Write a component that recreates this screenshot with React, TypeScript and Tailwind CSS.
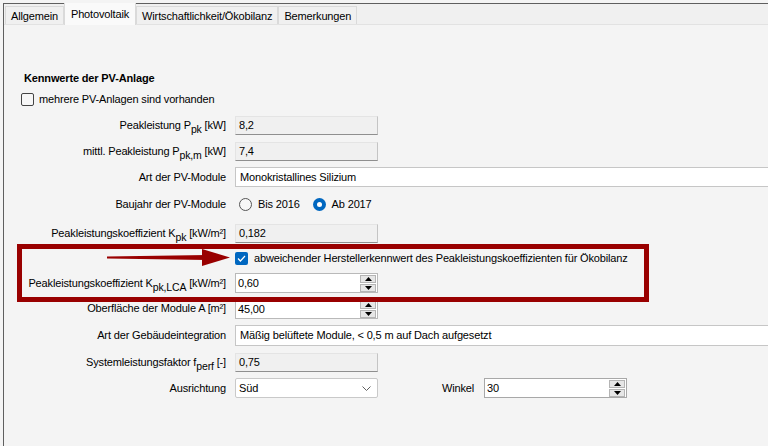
import type { ReactNode } from 'react';

const font = { fontFamily: '"Liberation Sans", Arial, sans-serif' };

function Sub({ children }: { children: ReactNode }) {
  return <span className="relative top-[4px] text-[10.5px] leading-none">{children}</span>;
}

function Row({ label, h, children }: { label?: ReactNode; h: string; children?: ReactNode }) {
  return (
    <div className={`flex items-center ${h}`}>
      <div className="w-[222px] shrink-0 text-right whitespace-nowrap">{label}</div>
      <div className="ml-[9px] flex flex-1 items-center">{children}</div>
    </div>
  );
}

function ReadOnly({ value }: { value: string }) {
  return (
    <div className="h-[19px] w-[143px] border border-[#e4e4e4] border-b-[#8f8f8f] border-r-[#c4c4c4] bg-[#f0f0f0] pl-[3px] leading-[17px]">
      {value}
    </div>
  );
}

function Spinner() {
  return (
    <div className="absolute right-[1px] top-[1px] flex h-[17px] w-[16px] flex-col gap-[1px]">
      <div className="flex h-[8px] items-center justify-center border border-[#b4b4b4] bg-[#e6e6e6]">
        <svg width="7" height="4" viewBox="0 0 7 4"><path d="M0 4 L3.5 0 L7 4Z" fill="#000" /></svg>
      </div>
      <div className="flex h-[8px] items-center justify-center border border-[#b4b4b4] bg-[#e6e6e6]">
        <svg width="7" height="4" viewBox="0 0 7 4"><path d="M0 0 L3.5 4 L7 0Z" fill="#000" /></svg>
      </div>
    </div>
  );
}

function Numeric({ value, border = 'border-[#b9b9b9]' }: { value: string; border?: string }) {
  return (
    <div className={`relative h-[20px] w-[143px] border ${border} bg-white pl-[2px] leading-[18px]`}>
      {value}
      <Spinner />
    </div>
  );
}

function Radio({ checked }: { checked?: boolean }) {
  return checked ? (
    <div className="flex h-[13px] w-[13px] items-center justify-center rounded-full bg-[#0067c0]">
      <div className="h-[5px] w-[5px] rounded-full bg-white" />
    </div>
  ) : (
    <div className="h-[13px] w-[13px] rounded-full border border-[#555] bg-[#f7f7f7]" />
  );
}

const tabs = ['Allgemein', 'Photovoltaik', 'Wirtschaftlichkeit/Ökobilanz', 'Bemerkungen'];

export default function App() {
  return (
    <div className="h-[446px] w-[768px] overflow-hidden bg-[#f4f4f4] pl-[3px] pt-[3px] text-[11px] tracking-[-0.15px] text-black" style={font}>
      <div className="relative h-full border-l border-t border-[#5f5f5f]">
        {/* tab strip */}
        <div className="flex h-[21px] items-end border-b border-[#e2e2e2] bg-[#f0f0f0] pl-[1px]">
          {tabs.map((t, i) =>
            i === 1 ? (
              <div key={t} className="relative -mb-[1px] flex h-[22px] items-start border-x border-[#dadada] bg-[#fafafa] px-[6px] pt-[3px]">
                {t}
              </div>
            ) : (
              <div key={t} className="flex h-[18px] items-center border-x border-t border-[#dadada] bg-[#f0f0f0] px-[5px] pt-[1px]">
                {t}
              </div>
            )
          )}
        </div>

        {/* panel */}
        <div className="relative pt-[45px]">
          <div className="ml-[20px] h-[16px] font-bold leading-[16px]">Kennwerte der PV-Anlage</div>
          <div className="ml-[17px] mt-[2px] flex h-[22px] items-center gap-[5px]">
            <div className="h-[13px] w-[13px] rounded-[2px] border border-[#444] bg-[#f7f7f7]" />
            <span>mehrere PV-Anlagen sind vorhanden</span>
          </div>

          <Row h="h-[26px] mt-[2px]" label={<>Peakleistung P<Sub>pk</Sub> [kW]</>}>
            <ReadOnly value="8,2" />
          </Row>
          <Row h="h-[26px]" label={<>mittl. Peakleistung P<Sub>pk,m</Sub> [kW]</>}>
            <ReadOnly value="7,4" />
          </Row>
          <Row h="h-[26px]" label="Art der PV-Module">
            <div className="h-[20px] flex-1 border-y border-l border-[#c6c6c6] bg-white pl-[4px] leading-[18px]">Monokristallines Silizium</div>
          </Row>
          <Row h="h-[29px]" label="Baujahr der PV-Module">
            <div className="ml-[4px] flex items-center gap-[6px]">
              <Radio />
              <span>Bis 2016</span>
              <div className="ml-[7px]"><Radio checked /></div>
              <span>Ab 2017</span>
            </div>
          </Row>
          <Row h="h-[28px]" label={<>Peakleistungskoeffizient K<Sub>pk</Sub> [kW/m²]</>}>
            <ReadOnly value="0,182" />
          </Row>
          <Row h="h-[23px]">
            <div className="flex items-center gap-[6px]">
              <div className="flex h-[13px] w-[13px] items-center justify-center rounded-[2px] bg-[#0067c0]">
                <svg width="9" height="7" viewBox="0 0 9 7"><path d="M1 3.5 L3.4 6 L8 1" fill="none" stroke="#fff" strokeWidth="1.2" /></svg>
              </div>
              <span>abweichender Herstellerkennwert des Peakleistungskoeffizienten für Ökobilanz</span>
            </div>
          </Row>
          <Row h="h-[26px]" label={<>Peakleistungskoeffizient K<Sub>pk,LCA</Sub> [kW/m²]</>}>
            <Numeric value="0,60" />
          </Row>
          <Row h="h-[25px]" label="Oberfläche der Module A [m²]">
            <Numeric value="45,00" />
          </Row>
          <Row h="h-[28px]" label="Art der Gebäudeintegration">
            <div className="h-[21px] flex-1 border-y border-l border-[#c6c6c6] bg-white pl-[4px] leading-[19px]">Mäßig belüftete Module, &lt; 0,5 m auf Dach aufgesetzt</div>
          </Row>
          <Row h="h-[26px]" label={<>Systemleistungsfaktor f<Sub>perf</Sub> [-]</>}>
            <ReadOnly value="0,75" />
          </Row>
          <Row h="h-[26px]" label="Ausrichtung">
            <div className="flex h-[20px] w-[143px] items-center justify-between rounded-[2px] border border-[#c9c9c9] bg-white pl-[3px] pr-[6px]">
              <span>Süd</span>
              <svg width="9" height="5" viewBox="0 0 9 5"><path d="M0.5 0.5 L4.5 4.5 L8.5 0.5" fill="none" stroke="#606060" strokeWidth="1" /></svg>
            </div>
            <span className="ml-[64px]">Winkel</span>
            <div className="ml-[10px]">
              <Numeric value="30" border="border-[#a8a8a8]" />
            </div>
          </Row>

          {/* annotation overlay */}
          <div className="pointer-events-none absolute left-[13px] top-[219px] h-[58px] w-[632px] border-[5px] border-[#990000]" />
          <svg className="pointer-events-none absolute left-[100px] top-[223px]" width="130" height="20" viewBox="0 0 130 20">
            <polygon points="3,8.5 103,7 103,12 3,10.5" fill="#990000" />
            <polygon points="98,1 126,9.5 98,18" fill="#990000" />
          </svg>
        </div>
      </div>
    </div>
  );
}
